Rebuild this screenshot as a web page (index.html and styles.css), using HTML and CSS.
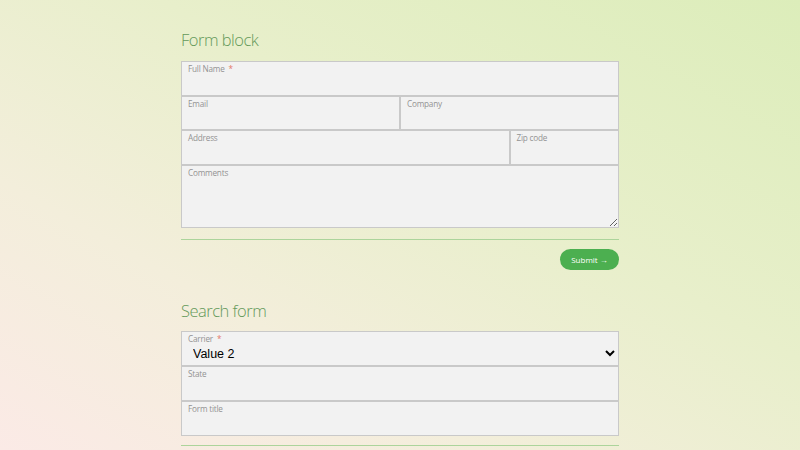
FILE: index.html
```html
<!DOCTYPE html>
<html>
<head>
<meta charset="utf-8">
<link rel="stylesheet" href="styles.css">
</head>
<body>
<main class="page">
  <section class="block">
    <h2 class="title">Form block</h2>
    <div class="fields">
      <div class="row h35">
        <div class="field full"><span class="label">Full Name <em class="req">*</em></span></div>
      </div>
      <div class="row h34">
        <div class="field half"><span class="label">Email</span></div>
        <div class="field half"><span class="label">Company</span></div>
      </div>
      <div class="row h35">
        <div class="field three"><span class="label">Address</span></div>
        <div class="field quarter"><span class="label">Zip code</span></div>
      </div>
      <div class="row h63">
        <div class="field full area"><span class="label">Comments</span><textarea class="ta"></textarea></div>
      </div>
    </div>
    <div class="rule"></div>
    <div class="actions"><button class="submit">Submit →</button></div>
  </section>
  <section class="block second">
    <h2 class="title">Search form</h2>
    <div class="fields">
      <div class="row h35">
        <div class="field full sel"><span class="label">Carrier <em class="req">*</em></span>
          <select class="select"><option>Value 1</option><option selected>Value 2</option></select>
        </div>
      </div>
      <div class="row h35">
        <div class="field full"><span class="label">State</span></div>
      </div>
      <div class="row h35">
        <div class="field full"><span class="label">Form title</span></div>
      </div>
    </div>
    <div class="rule"></div>
  </section>
</main>
</body>
</html>
```
FILE: styles.css
```css
html, body {
  margin: 0;
  height: 100%;
}
body {
  background: linear-gradient(to top right, #fbeae6 0%, #f3eedb 30%, #e8efcb 60%, #dcedba 100%);
  font-family: "Open Sans", "Liberation Sans", sans-serif;
  overflow: hidden;
}
.page {
  width: 438px;
  margin: 0 auto;
  padding-top: 30px;
}
.title {
  margin: 0 0 11px;
  font-size: 16.5px;
  line-height: 20px;
  font-weight: 300;
  letter-spacing: -0.5px;
  color: #64995a;
}
.second {
  margin-top: 31px;
}
.second .title {
  margin-bottom: 10px;
}
.fields {
  display: flex;
  flex-direction: column;
}
.row {
  display: flex;
}
.h35 { height: 35px; }
.h34 { height: 34px; }
.h63 { height: 63px; }
.field {
  box-sizing: border-box;
  border: 1px solid #c9c9c9;
  background: #f2f2f2;
  padding: 1px 6px 0;
  display: flex;
  flex-direction: column;
}
.full { flex: 1; }
.half { width: 50%; }
.three { width: 75%; }
.quarter { width: 25%; }
.label {
  font-size: 8.2px;
  line-height: 12px;
  letter-spacing: -0.2px;
  color: #929292;
}
.req {
  font-style: normal;
  color: #e4786a;
  margin-left: 2px;
}
.area {
  padding-right: 0;
}
.ta {
  flex: 1;
  border: none;
  background: transparent;
  resize: vertical;
  outline: none;
  margin: 0;
  padding: 0;
}
.sel {
  padding-right: 0;
}
.select {
  border: none;
  background: transparent;
  font-family: "Liberation Sans", Arial, sans-serif;
  font-size: 12.5px;
  color: #000;
  padding: 0;
  margin: 0 0 0 1px;
  height: 17px;
  outline: none;
}
.rule {
  height: 1px;
  background: #acd49b;
  margin-top: 11px;
}
.actions {
  display: flex;
  justify-content: flex-end;
  margin-top: 9px;
}
.submit {
  width: 59px;
  height: 21px;
  border: none;
  border-radius: 11px;
  background: #4caf50;
  color: #fff;
  font-family: "Open Sans", sans-serif;
  font-size: 8px;
  padding: 0;
}
.second .rule {
  margin-top: 9px;
}
```
